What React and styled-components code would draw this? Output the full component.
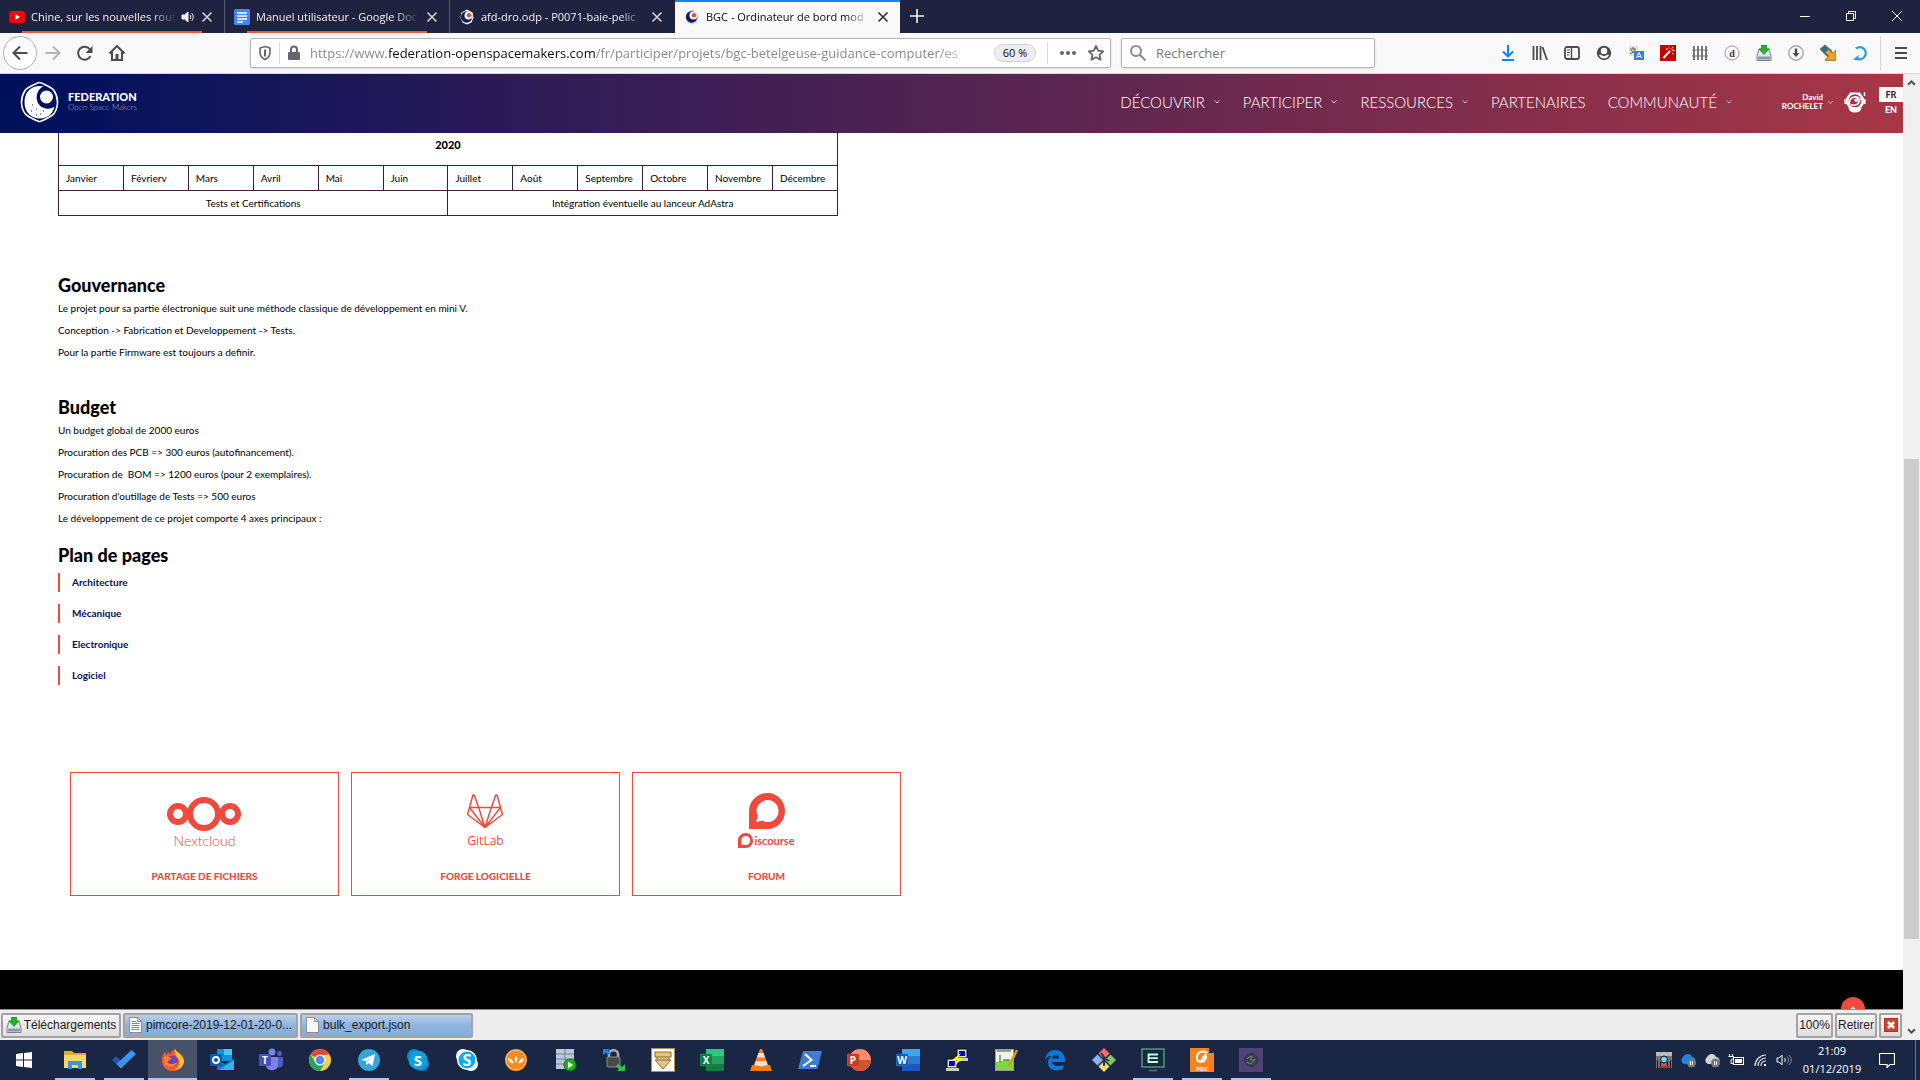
import React from 'react';
import styled, { createGlobalStyle, css } from 'styled-components';

const CHROME_FONT = '"Open Sans", "Noto Sans", sans-serif';
const SITE_FONT = 'Lato, "Open Sans", sans-serif';
const CLASSIC_FONT = '"Liberation Sans", Arial, sans-serif';
const RED = '#ef4a3c';

const GlobalStyle = createGlobalStyle`
    * {
        box-sizing: border-box;
    }

    body {
        margin: 0;
        overflow: hidden;
        background: #fff;
        font-family: ${CHROME_FONT};
    }

    button,
    input {
        margin: 0;
        padding: 0;
        border: 0;
        background: none;
        color: inherit;
        font: inherit;
    }

    a {
        color: inherit;
        text-decoration: none;
    }

    svg {
        display: block;
        flex: none;
    }
`;

const Window = styled.div`
    display: flex;
    flex-direction: column;
    height: 100vh;
`;

/* ---------- tab strip ---------- */

const TabStrip = styled.div`
    display: flex;
    flex: none;
    height: 33px;
    background: #20233f;
    color: #f0f0f4;
`;

const Tab = styled.div`
    position: relative;
    display: flex;
    align-items: center;
    gap: 6px;
    flex: 0 1 225px;
    min-width: 0;
    padding: 1px 10px 0 9px;
    border-right: 1px solid ${props => props.$last ? 'transparent' : '#585a70'};
    ${props => props.$active && css`
        border-right: 0;
        box-shadow: inset 0 2px 0 #0a84ff;
        background: #f9f9fa;
        color: #0c0c0d;
    `}
`;

const TabTitle = styled.span`
    flex: 1;
    min-width: 0;
    overflow: hidden;
    white-space: nowrap;
    font-size: 11px;
    line-height: 20px;
    mask-image: linear-gradient(to left, transparent 0, #000 24px);
`;

const ContainerLine = styled.span`
    position: absolute;
    left: 22px;
    right: 22px;
    bottom: 0;
    height: 2px;
    background: #e05f3f;
`;

const PlainButton = styled.button`
    display: flex;
    align-items: center;
    justify-content: center;
    flex: none;
    width: ${props => props.$w || 16}px;
    height: ${props => props.$h || 16}px;
    color: ${props => props.$color || 'inherit'};
`;

const WindowButtons = styled.div`
    display: flex;
    margin-left: auto;
`;

/* ---------- toolbar ---------- */

const Toolbar = styled.div`
    display: flex;
    align-items: center;
    flex: none;
    height: 41px;
    border-bottom: 1px solid #d7d7db;
    background: #f9f9fa;
    color: #4a4a4f;
`;

const NavButtons = styled.div`
    display: flex;
    flex: 0 1 250px;
    align-items: center;
    padding-left: 3px;
`;

const BackButton = styled.button`
    display: flex;
    align-items: center;
    justify-content: center;
    width: 34px;
    height: 34px;
    border: 1px solid #b1b1b3;
    border-radius: 50%;
    background: #fff;
`;

const FieldBox = styled.div`
    display: flex;
    align-items: center;
    min-width: 0;
    height: 30px;
    border: 1px solid #b5b5b8;
    border-radius: 2px;
    background: #fff;
    box-shadow: 0 1px 3px rgba(0, 0, 0, 0.1);
`;

const UrlBox = styled(FieldBox)`
    flex: 0 1 861px;
    padding-left: 6px;
`;

const SearchBox = styled(FieldBox)`
    flex: 0 1 254px;
    margin-left: 10px;
    padding-left: 8px;
    gap: 10px;
`;

const UrlInput = styled.input`
    flex: 1;
    min-width: 0;
    margin-left: 8px;
    height: 24px;
    font-size: 13px;
    background: linear-gradient(to right, #85858a 79px, #0c0c0d 79px, #0c0c0d 286px, #85858a 286px, #85858a 625px, #d5d5d8 655px);
    -webkit-background-clip: text;
    background-clip: text;
    -webkit-text-fill-color: transparent;
    outline: 0;
`;

const SearchInput = styled.input`
    flex: 1;
    min-width: 0;
    height: 24px;
    font-size: 13px;
    outline: 0;

    &::placeholder {
        color: #77777b;
        opacity: 1;
    }
`;

const Divider = styled.span`
    flex: none;
    width: 1px;
    height: ${props => props.$h || 22}px;
    margin: 0 ${props => props.$gap || 6}px;
    background: #d7d7db;
`;

const ZoomButton = styled.button`
    flex: none;
    width: 42px;
    height: 18px;
    margin: 0 5px 0 20px;
    border: 1px solid #d2d2d6;
    border-radius: 9px;
    background: #ededf0;
    color: #0c0c0d;
    font-size: 11px;
    line-height: 16px;
`;

const Extensions = styled.div`
    display: flex;
    align-items: center;
    gap: 16px;
    margin-left: auto;
    padding-right: 11px;
`;

/* ---------- viewport ---------- */

const Viewport = styled.div`
    display: flex;
    flex: 1;
    min-height: 0;
`;

const Page = styled.div`
    display: flex;
    flex-direction: column;
    flex: 1;
    min-width: 0;
    font-family: ${SITE_FONT};
`;

const ScrollBar = styled.div`
    display: flex;
    flex-direction: column;
    flex: none;
    width: 17px;
    background: #f0f0f0;
    color: #505050;
`;

const ScrollGap = styled.span`
    flex: ${props => props.$grow} 0 0;
`;

const ScrollThumb = styled.span`
    flex: 480 0 0;
    margin: 0 1px;
    background: #cdcdcd;
`;

const SiteHeader = styled.header`
    display: flex;
    align-items: center;
    flex: none;
    height: 59px;
    padding: 0 0 3px 20px;
    background: linear-gradient(to right, #00115c 2%, #a73746 100%);
    color: #fff;
`;

const Brand = styled.a`
    display: flex;
    align-items: center;
    gap: 9px;
`;

const BrandName = styled.span`
    display: flex;
    flex-direction: column;
    font-size: 11px;
    line-height: 10px;
    font-weight: 900;
`;

const BrandSub = styled.span`
    font-size: 8px;
    font-weight: 300;
    color: #a7abd0;
`;

const MainNav = styled.nav`
    display: flex;
    align-items: center;
    gap: 22px;
    margin-left: auto;
    font-size: 15px;
    font-weight: 300;
    line-height: 20px;
`;

const NavLink = styled.a`
    display: flex;
    align-items: center;
    gap: 8px;
    white-space: nowrap;
`;

const Account = styled.a`
    display: flex;
    align-items: center;
    gap: 4px;
    margin-left: 49px;
    font-size: 8px;
    font-weight: 700;
    line-height: 9px;
    text-align: right;
`;

const Avatar = styled.span`
    margin: 0 13px 0 10px;
`;

const Languages = styled.div`
    display: flex;
    flex-direction: column;
    width: 24px;
    font-size: 9px;
    font-weight: 900;
    line-height: 15px;
    text-align: center;
`;

const Language = styled.a`
    background: ${props => props.$current ? '#fff' : 'transparent'};
    color: ${props => props.$current ? '#451c3c' : '#fff'};
`;

const Content = styled.main`
    flex: 1;
    min-height: 0;
    overflow: hidden;
    padding: 0 58px;
    color: #000;
`;

const Planning = styled.table`
    width: 100%;
    max-width: 780px;
    table-layout: fixed;
    border-collapse: collapse;
    font-size: 10px;
    line-height: 14px;

    th,
    td {
        height: 25px;
        padding: 0 0 0 7px;
        border: 1px solid #3f1b3d;
        text-align: left;
    }

    th {
        height: 32px;
        padding: 5px 0 0;
        border-top: 0;
        font-size: 11px;
        font-weight: 900;
        text-align: center;
        vertical-align: top;
    }

    td[colspan] {
        padding: 0;
        text-align: center;
    }
`;

const Heading = styled.h2`
    margin: ${props => props.$top}px 0 0;
    font-size: 18px;
    font-weight: 900;
    line-height: 24px;
`;

const Text = styled.p`
    margin: 0;
    font-size: 10px;
    line-height: 22px;
    white-space: pre-wrap;
`;

const PageList = styled.ul`
    display: flex;
    flex-direction: column;
    gap: 12px;
    margin: 6px 0 87px;
    padding: 0;
    list-style: none;
`;

const PageItem = styled.li`
    padding-left: 12px;
    border-left: 2px solid ${RED};
    color: #00115c;
    font-size: 10px;
    font-weight: 700;
    line-height: 19px;
`;

const Cards = styled.div`
    display: grid;
    grid-template-columns: repeat(3, 1fr);
    gap: 12px;
    max-width: 843px;
    padding-left: 12px;
`;

const Card = styled.a`
    display: flex;
    flex-direction: column;
    align-items: center;
    padding: 20px 0 12px;
    border: 1px solid ${RED};
    color: ${RED};
`;

const Wordmark = styled.span`
    display: flex;
    align-items: center;
    gap: 1px;
    height: 20px;
    font-family: ${props => props.$font || SITE_FONT};
    font-size: ${props => props.$size}px;
    font-weight: ${props => props.$weight};
    line-height: 20px;
`;

const CardLabel = styled.span`
    margin-top: 18px;
    font-size: 10px;
    font-weight: 900;
    line-height: 14px;
`;

const Footer = styled.footer`
    display: flex;
    justify-content: flex-end;
    flex: none;
    height: 39px;
    padding: 27px 38px 0 0;
    overflow: hidden;
    background: #000;
`;

const TopButton = styled.button`
    display: flex;
    justify-content: center;
    flex: none;
    width: 24px;
    height: 24px;
    padding-top: 9px;
    border-radius: 50%;
    background: ${RED};
    color: #fff;
`;

/* ---------- download bar ---------- */

const DownloadBar = styled.div`
    display: flex;
    align-items: center;
    gap: 2px;
    flex: none;
    height: 31px;
    padding: 0 1px;
    border-top: 1px solid #8c8c8c;
    background: #ededed;
    font-family: ${CLASSIC_FONT};
`;

const BarButton = styled.button`
    display: flex;
    align-items: center;
    justify-content: ${props => props.$file ? 'flex-start' : 'center'};
    gap: ${props => props.$file ? 4 : 2}px;
    flex: 0 1 ${props => props.$w}px;
    height: 25px;
    padding: 0 ${props => props.$file ? 4 : 0}px;
    border: 2px solid #a3a3a3;
    border-radius: 2px;
    background: ${props => props.$file
        ? 'linear-gradient(#b9d0ec, #8fb3dd 50%, #86acda)'
        : 'linear-gradient(#f6f6f6, #dedede)'};
    color: #1c1c1c;
    font-size: 12px;
    white-space: nowrap;
`;

const Push = styled.span`
    flex: 1;
`;

/* ---------- taskbar ---------- */

const TaskBar = styled.div`
    display: flex;
    flex: none;
    height: 40px;
    background: #1a2744;
    color: #fff;
`;

const StartButton = styled(PlainButton)`
    width: 48px;
    height: 40px;
    margin-right: 2px;
`;

const TaskButton = styled.button`
    display: flex;
    align-items: center;
    justify-content: center;
    flex: 0 1 49px;
    height: 40px;
    background-color: ${props => props.$active ? '#48536b' : 'transparent'};
    ${props => props.$running && css`
        background-image: linear-gradient(#a9c7f3, #a9c7f3);
        background-repeat: no-repeat;
        background-position: bottom;
        background-size: ${props.$active ? '49px' : '40px'} 2px;
    `}
`;

const Tray = styled.div`
    display: flex;
    align-items: center;
    gap: 8px;
    margin-left: auto;
`;

const Clock = styled.time`
    display: flex;
    flex-direction: column;
    width: 64px;
    margin-right: 7px;
    font-size: 11px;
    line-height: 18px;
    text-align: center;
`;

const DesktopEdge = styled.button`
    width: 5px;
    height: 40px;
    margin-left: 12px;
    border-left: 1px solid #66708a;
`;

/* ---------- drawings ---------- */

const Svg = ({ w = 16, h = w, box, children, ...rest }) => (
    <svg width={w} height={h} viewBox={box || `0 0 ${w} ${h}`} fill="none" aria-hidden="true" {...rest}>
        {children}
    </svg>
);

const Chevron = ({ w = 8 }) => (
    <Svg w={w} box="0 0 8 8" stroke="currentColor" strokeOpacity=".8">
        <path d="M1.500 2.500L4 5l2.500-2.500" />
    </Svg>
);

const CloseIcon = () => (
    <Svg w={12} stroke="currentColor" strokeOpacity=".85" strokeWidth="1.600"><path d="M1.500 1.500l9 9M10.500 1.500l-9 9" /></Svg>
);

const YoutubeIcon = () => (
    <Svg><rect y="2" width="16" height="12" rx="3" fill="#f00" /><path d="M6.500 5.200v5.600L11 8z" fill="#fff" /></Svg>
);

const DocsIcon = () => (
    <Svg><rect width="16" height="16" rx="1.500" fill="#4285f4" /><path d="M3 4h10M3 7h10M3 10h10M3 13h6" stroke="#fff" strokeWidth="1.500" /></Svg>
);

const FederationIcon = ({ ring = '#fff' }) => (
    <Svg>
        <path d="M8 .5l5.500 3 1 5-2 5L8 15.500l-4.500-2-2-5 1-5z" fill={ring} />
        <circle cx="7.600" cy="8" r="5.700" fill="#111a5c" />
        <circle cx="9.500" cy="6.500" r="4" fill="#fff" />
        <circle cx="10" cy="6.200" r="2.300" fill={RED} />
    </Svg>
);

const SoundIcon = () => (
    <Svg w={14} h={14} stroke="currentColor">
        <path d="M1 5h2.500L7 2v10L3.500 9H1z" fill="currentColor" />
        <path d="M9 5c1 1 1 3 0 4M10.500 3c2.300 2 2.300 6 0 8" />
    </Svg>
);

const FederationLogo = () => (
    <Svg w={39} h={42}>
        <path d="M19.500 1.500c1.500 0 13 5.500 14.500 8 2.500 4 3.500 8 3.500 11.500S36.500 29 34 32.500c-1.500 2.500-13 8-14.500 8s-13-5.500-14.500-8C2.500 29 1.500 24.500 1.500 21S2.500 13.500 5 9.500c1.500-2.500 13-8 14.500-8z" stroke="#fff" strokeWidth="1.600" />
        <path d="M20 5C10 5 4.500 12 4.500 21.500S11 37.500 20 37.500c8 0 13-5 14.500-12-3 3-12 3.500-16-2.500-4-6.500-1-15.500 5-17.500z" fill="#fff" />
        <circle cx="26.500" cy="16" r="6.500" fill="#fff" />
        <path d="M12 24h1M16 28h1M20 33h1M11 30h1M23 30h1M16 34h1" stroke="#00115c" />
    </Svg>
);

const AstronautIcon = () => (
    <Svg w={22} h={22}>
        <path d="M4.500 17h13c-.5 3-3 4.500-6.500 4.500S5 20 4.500 17z" fill="#fff" />
        <path d="M6 1.500h10l4 6v5l-4 6H6l-4-6v-5z" fill="#fff" />
        <circle cx="11" cy="9.800" r="6.500" fill="#a03447" />
        <path d="M5.500 13c-1-6 6-9.500 10.500-5-3-.5-4.500 0-5.500 1.500M6.500 13.500c4 1.500 8 .5 9-3.500H11" stroke="#fff" strokeWidth="1.600" />
        <path d="M1.200 8v5M20.800 8v5M20.500 5V1" stroke="#fff" strokeWidth="1.500" />
    </Svg>
);

const NextcloudLogo = () => (
    <Svg w={76} h={38} box="1 0 76 38" stroke="currentColor" strokeWidth="6">
        <circle cx="38" cy="21" r="14" />
        <circle cx="12" cy="21" r="8" />
        <circle cx="64" cy="21" r="8" />
    </Svg>
);

const GitlabLogo = () => (
    <Svg w={38} h={38} box="1 1 38 38" stroke="currentColor" strokeWidth="1.500" strokeLinejoin="round">
        <path d="M19 35.500L1.500 22.500 7 3h1.200l4.500 12.500h12.600L29.800 3H31l5.500 19.500z" />
        <path d="M12.700 15.500L19 35.500l6.300-20M3.500 15.500h9.200M25.300 15.500h9.200M3.500 15.500L19 35.500l15.500-20" />
    </Svg>
);

const DiscourseMark = ({ size, box = '0 0 36 36' }) => (
    <Svg w={size} box={box}>
        <path d="M18.500 0C8.500 0 0 8 0 18v18h18.500C28.500 36 36 28 36 18S28.500 0 18.500 0zm.5 7c6 0 10.500 5 10.500 11S25 29 19 29c-2 0-4-.5-5.500-1.500L7 29l2-6.500C8 21 7.500 19.500 7.500 18 7.500 12 13 7 19 7z" fill="currentColor" />
    </Svg>
);

const DriveIcon = () => (
    <Svg>
        <path d="M3 4h10l2 7v4.500H1V11z" fill="#dfe4ec" stroke="#7d828c" />
        <path d="M2 11.500h12v3H2z" fill="#8e98a8" />
        <path d="M5.500 0h5v4H13L8 9.500 3 4h2.500z" fill="#23b423" stroke="#128012" strokeWidth=".6" />
    </Svg>
);

const FileIcon = ({ lined }) => (
    <Svg w={13} h={16}>
        <path d="M.5.500h8l4 4v11H.500z" fill="#f8f8f8" stroke="#8d8d8d" />
        <path d="M8.500.500v4h4" stroke="#8d8d8d" />
        {lined && <path d="M2.500 4.500H7M2.500 6.500h8M2.500 8.500h8M2.500 10.500h8M2.500 12.500h8" stroke="#888" />}
    </Svg>
);

const extensions = [
    ['Téléchargements', <Svg stroke="#0a84ff" strokeWidth="2"><path d="M8 0v11M3 6.500l5 5 5-5M2 15h12" /></Svg>],
    ['Bibliothèque', <Svg stroke="#4a4a4f" strokeWidth="1.800"><path d="M1.500 1v14M5 1v14M8.500 1v14M10.500 2l4.500 13" /></Svg>],
    ['Panneaux latéraux', <Svg stroke="#4a4a4f" strokeWidth="1.800"><rect x="1" y="2" width="14" height="12" rx="2" /><path d="M7.500 2v12" strokeWidth="1.400" /><path d="M3 5h3M3 7.500h3M3 10h2" strokeWidth="1" /></Svg>],
    ['Compte', <Svg><circle cx="8" cy="8" r="7.200" fill="#4a4a4f" /><circle cx="8" cy="6" r="3.200" fill="#f9f9fa" /><path d="M3 10c1.500-.6 2.500 0 3.500.8 1 .5 2 .5 3 0 1-.8 2-1.400 3.500-.8-1.500 4.500-8.500 4.500-10 0z" fill="#f9f9fa" /></Svg>],
    ['Traduire', <Svg><rect x="1" y="1" width="9" height="10" fill="#e5e2cf" /><path d="M2 4h6M5 2v2M7 4c-1 3-3 4-5 5M3 5c1 2 3 3 5 4" stroke="#656565" /><rect x="6" y="6" width="10" height="9" fill="#3d7de0" /><path d="M8.500 13L11 7.500l2.500 5.500M9.500 11.500h3" stroke="#fff" /></Svg>],
    ['Baguette', <Svg><rect width="16" height="16" fill="#c40000" /><path d="M3.500 13l6.500-7" stroke="#fff" strokeWidth="2" /><path d="M9 2.500l1 1M13 2l-1 1.500M11.500 5l3 .5M6 4h2M12 8l1.500 1" stroke="#fff" /></Svg>],
    ['Grille', <Svg stroke="#77777b"><path d="M2 1v14M6 1v14M10 1v14M14 1v14" strokeWidth="2" /><path d="M0 5h16M0 11h16" /></Svg>],
    ['Dictionnaire', <Svg><circle cx="8" cy="8" r="7" fill="#fff" stroke="#9c8ac8" /><text x="8" y="11.500" textAnchor="middle" fontFamily="Liberation Serif" fontWeight="700" fontSize="10" fill="#333">d</text></Svg>],
    ['Barre', <DriveIcon />],
    ['Récupérer', <Svg><circle cx="8" cy="8" r="7.200" stroke="#aaa" strokeWidth="1.500" /><path d="M8 3.500v6" stroke="#4a4a4f" strokeWidth="2.500" /><path d="M4.500 8h7L8 12z" fill="#4a4a4f" /></Svg>],
    ['Flèche', <Svg><path d="M0 4l5-4 6 5 1.500 3L8 12 5 9.500z" fill="#31708a" stroke="#284a5a" strokeWidth=".5" /><path d="M5 7.500L8.500 4l4 4L16 5v10.500H5L8.500 11z" fill="#eda125" stroke="#7e5c28" strokeWidth=".7" /></Svg>],
    ['Recharger tout', <Svg stroke="#2aa3d8" strokeWidth="2.400"><path d="M4 3.500A6 6 0 1 1 5 13.500" /><path d="M1 14.500l5.500 1V10z" fill="#2aa3d8" stroke="none" /></Svg>],
];

const OfficeIcon = ({ letter, dark, mid, light, round }) => (
    <Svg w={24}>
        {round
            ? <><circle cx="13" cy="12" r="11" fill={light} /><path d="M13 12h11a11 11 0 0 1-22 0z" fill={mid} /></>
            : <><rect x="6" y="1" width="18" height="22" rx="1" fill={mid} /><path d="M6 1h18v7H6z" fill={light} /><path d="M6 16h18v7H6z" fill={dark} /></>}
        <rect y="6" width="12" height="12" rx="1" fill={dark} stroke={mid} strokeWidth=".5" />
        <text x="6" y="15.500" textAnchor="middle" fontFamily="Open Sans" fontWeight="700" fontSize="10" fill="#fff">{letter}</text>
    </Svg>
);

const tasks = [
    { name: 'Explorateur', running: true, icon: <Svg w={24}><path d="M1 3h8l2 2h12v15H1z" fill="#e8a92a" /><path d="M1 7h22v13H1z" fill="#fbd668" /><path d="M5 21v-8h14v8h-4v-4H9v4z" fill="#3f91d8" /></Svg> },
    { name: 'To Do', running: true, icon: <Svg w={24}><path d="M0 12l4-4 6.500 6L9 20.500z" fill="#1e56b4" /><path d="M4.500 16L19.500 2 24 6 9 20.500z" fill="#3d94ee" /></Svg> },
    { name: 'Firefox', running: true, active: true, icon: <Svg w={24}><path d="M12 23C5 23 1 18 1 12c0-3 1-6 3-8l1 3 3-3 1 3c1-3 3-5 5-6 1 3 3 4 4 6l2-1c2 3 3 5 3 7 0 6-5 10-11 10z" fill="#ff5a2a" /><path d="M14 1c1 3 8 5 9 12 0 5-5 9-10 9 6-3 7-8 4-12-2-2-4-5-3-9z" fill="#ffc52e" /><circle cx="11.500" cy="13" r="5.500" fill="#7540bd" /><path d="M3 9c3-1 6 0 8 2-3 0-3 2-5 3 3 4 8 2 10 0-1 5-9 7-12 2z" fill="#ff8a22" /></Svg> },
    { name: 'Outlook', icon: <Svg w={24}><path d="M7 1h15v12H7z" fill="#1490df" /><path d="M14 1h8v6h-8z" fill="#50c4f5" /><path d="M7 12l8 4 9-5v11H7z" fill="#1478c8" /><path d="M9 22l15-10v10z" fill="#35b3ed" /><rect y="6" width="12" height="12" rx="1" fill="#0b5cab" /><circle cx="6" cy="12" r="3" stroke="#fff" strokeWidth="1.800" /></Svg> },
    { name: 'Teams', icon: <Svg w={24}><circle cx="13" cy="4" r="3.500" fill="#7b83eb" /><circle cx="20.500" cy="5.500" r="2.500" fill="#5059c9" /><path d="M17 9h7v7c0 3-4 5-7 3z" fill="#5059c9" /><path d="M7 9h12v8c0 7-12 7-12 0z" fill="#7b83eb" /><rect y="6" width="12" height="12" rx="1" fill="#4850b8" /><text x="6" y="15.500" textAnchor="middle" fontFamily="Open Sans" fontWeight="700" fontSize="10" fill="#fff">T</text></Svg> },
    { name: 'Chrome', icon: <Svg w={24}><circle cx="12" cy="12" r="11" fill="#f9cf48" /><path d="M12 12L2.500 6.500A11 11 0 0 1 21.500 6.500L12 7z" fill="#dc4a3d" /><path d="M2.500 6.500A11 11 0 0 0 12 23l5-8.500-9.300 0z" fill="#27a35a" /><circle cx="12" cy="12" r="5.500" fill="#fff" /><circle cx="12" cy="12" r="4.300" fill="#4a8bf0" /></Svg> },
    { name: 'Telegram', running: true, icon: <Svg w={24}><circle cx="12" cy="12" r="11" fill="#35a5dc" /><path d="M4 12l14-6-2.500 12-4-3-2 2-.5-4z" fill="#fff" /><path d="M9 13l6.500-5-4.500 6z" fill="#b8d8ea" /></Svg> },
    { name: 'Skype Entreprise', icon: <Svg w={24}><circle cx="8" cy="8" r="7" fill="#0e87c9" /><circle cx="16" cy="16" r="7" fill="#0e87c9" /><circle cx="12" cy="12" r="9.500" fill="#0e9fdc" /><text x="12" y="17.500" textAnchor="middle" fontFamily="Open Sans" fontWeight="700" fontSize="15" fill="#fff">S</text></Svg> },
    { name: 'Skype', icon: <Svg w={24}><circle cx="8" cy="8" r="7" fill="#fff" /><circle cx="16" cy="16" r="7" fill="#fff" /><circle cx="12" cy="12" r="10" fill="#fff" /><circle cx="12" cy="12" r="8.500" fill="#0dabed" /><text x="12" y="18" textAnchor="middle" fontFamily="Open Sans" fontWeight="700" fontSize="16" fill="#fff">S</text></Svg> },
    { name: 'WampServer', icon: <Svg w={24}><circle cx="12" cy="12" r="11" fill="#f78b1f" /><circle cx="12" cy="12" r="10" stroke="#ffc384" /><path d="M4 10.500c2.500-.5 4 1 4.500 2.500.5 1 1 1.500 1.500 2-3 1-5.500-1.500-6-4.500zM12 8c1.500 1.500 2 3.500 0 7-2-3.500-1.500-5.500 0-7zM20 10.500c-.5 3-3 5.500-6 4.500 1-1 1-1.500 1.500-2.500.5-1 2-2.500 4.500-2z" fill="#fff" /></Svg> },
    { name: 'Serveurs', icon: <Svg w={24}><path d="M3 1h18v20H3z" fill="#b9c8dc" /><path d="M3 6h18M3 11h18M3 16h18M12 1v20" stroke="#6e8098" /><circle cx="17" cy="17" r="6" fill="#18b51a" stroke="#087008" /><path d="M15 13.500v7l5-3.500z" fill="#fff" /></Svg> },
    { name: 'Verrou', icon: <Svg w={24}><path d="M7 10V6c0-5 9-5 9 0v4" stroke="#aaa" strokeWidth="2.500" /><rect x="5" y="9" width="13" height="10" rx="1" fill="#4a4a4a" stroke="#888" /><path d="M1 1h7L6 3l2 2-2 2-2-2-3 2z" fill="#1683e8" /><path d="M23 23h-8l2-2-3-3 2-2 4 3 3-3z" fill="#35c143" /></Svg> },
    { name: 'Réception', icon: <Svg w={24}><rect x=".5" y=".5" width="23" height="23" fill="#fff" stroke="#b48d4a" /><path d="M4 4h16v5h-2v3h2l-8 9-8-9h2V9H4z" fill="#e5c67f" stroke="#896a35" /><path d="M6 9h12M6 12h12" stroke="#896a35" /></Svg> },
    { name: 'Excel', icon: <OfficeIcon letter="X" dark="#107c41" mid="#21a366" light="#33c481" /> },
    { name: 'VLC', icon: <Svg w={24}><path d="M3 17h18l2 6H1z" fill="#f07c10" /><path d="M11 1h2l7 18c-3 2-13 2-16 0z" fill="#f58312" /><path d="M9.500 5h5l1.500 4.500H8zM7 13h10l1.500 4c-4 1.500-9 1.500-13 0z" fill="#e5e5e5" /></Svg> },
    { name: 'PowerShell', icon: <Svg w={24}><path d="M5 3h19l-4.500 18H0z" fill="#3c7bd6" /><path d="M7 6l6.500 6L5 18M12 18h6" stroke="#fff" strokeWidth="2" /></Svg> },
    { name: 'PowerPoint', icon: <OfficeIcon round letter="P" dark="#c43e1c" mid="#d35230" light="#ff8f6b" /> },
    { name: 'Word', icon: <OfficeIcon letter="W" dark="#185abd" mid="#2b7cd3" light="#41a5ee" /> },
    { name: 'PuTTY', icon: <Svg w={24}><rect x="12" y="1" width="10" height="9" fill="#ddd" stroke="#111" /><path d="M14 3h6v5h-6z" fill="#00d" /><path d="M12 10h11v3H12z" fill="#ccc" /><rect x="2" y="11" width="10" height="9" fill="#ddd" stroke="#111" /><path d="M4 13h6v5H4z" fill="#00d" /><path d="M1 20h13v3H1z" fill="#ccc" /><path d="M16 5l-9 7h5l-3 6 9-8h-5z" fill="#ff0" /></Svg> },
    { name: 'Notepad++', icon: <Svg w={24}><rect x="1.500" y="1.500" width="18" height="21" fill="#eef7e4" stroke="#9a9a9a" /><path d="M2 14l17-3v11H2z" fill="#81d53e" /><path d="M6 7v7M9 12h6M3 3h14" stroke="#444" /><path d="M23 2L15 18" stroke="#dc9a20" strokeWidth="2.500" /></Svg> },
    { name: 'Edge', icon: <Svg w={24}><path d="M2 12C3 5 7 2 12 2c6 0 10 4 10 10v2H9c0 4 7 5 11 3v4c-6 3-15 1.500-15-6 0-4 2-5.500 4-7-4 0-6 2-7 4zm7-1.500h7c0-5-7-4.500-7 0z" fill="#0a78d7" /></Svg> },
    { name: 'Git', icon: <Svg w={24}><path d="M12 0l5.500 5.500L12 11 6.500 5.500z" fill="#f5716e" /><path d="M18.500 6.500L24 12l-5.500 5.500L13 12z" fill="#7cc767" /><path d="M5.500 6.500L11 12l-5.500 5.500L0 12z" fill="#85b3ef" /><path d="M12 13l5.500 5.500L12 24l-5.500-5.500z" fill="#f3dc72" /><path d="M9 5l3 4v9M12 10l5 3" stroke="#29313b" strokeWidth="2" /></Svg> },
    { name: 'Camtasia', running: true, icon: <Svg w={24}><rect x="1" y="1" width="22" height="18" fill="#083038" stroke="#5d8d88" strokeWidth="1.500" /><path d="M17 6.500H7.500v7.500H17M8 10.200h9" stroke="#e0eeeb" strokeWidth="1.800" /><path d="M8 22.500h8" stroke="#4b7a79" strokeWidth="1.500" /></Svg> },
    { name: 'Foxit Reader', running: true, icon: <Svg w={24}><path d="M0 0h19l5 5v19H0z" fill="#f58320" /><path d="M17.500 5C11 1 6 6 7 11c1 4 8 4 9-2l-4 .5M11 13l5-7" stroke="#fff" strokeWidth="2" /><text x="12" y="22.500" textAnchor="middle" fontFamily="Open Sans" fontWeight="700" fontSize="6" fill="#fff">PDF</text><path d="M19 0v5h5z" fill="#1a2744" /></Svg> },
    { name: 'Minuteur', running: true, icon: <Svg w={24}><rect width="24" height="24" fill="#4e4277" /><circle cx="12" cy="12" r="6.500" fill="#3a4156" stroke="#2d3248" /><path d="M8 14c2 3 7 1 8-3M12 9v3h4M8 11c1-2 4-3 6-2" stroke="#8d8150" /></Svg> },
];

const trayIcons = [
    <Svg><rect width="16" height="16" fill="#777" /><path d="M0 0h16v4H0z" fill="#bbb" /><path d="M1.500 8v8M14.500 8v8M4.500 10v4M11.500 10v4" stroke="#111" /><circle cx="8" cy="7.500" r="3.500" fill="#7fc7f4" stroke="#111" /><path d="M3 15h10" stroke="#c22" strokeWidth="2" /></Svg>,
    <Svg><path d="M4 12a4 4 0 0 1-1-7c2-4 8-4 9 0 4 0 5 6 1 7z" fill="#1689df" /><circle cx="11.500" cy="11" r="4.500" fill="#777" /><path d="M10.500 9v4M12.500 9v4" stroke="#fff" /></Svg>,
    <Svg><path d="M4 12a4 4 0 0 1-1-7c2-4 8-4 9 0 4 0 5 6 1 7z" fill="#d0d3da" /><circle cx="11.500" cy="11" r="4.500" fill="#777" /><path d="M10.500 9v4M12.500 9v4" stroke="#fff" /></Svg>,
    <Svg stroke="#fff"><path d="M1.500 2v2M4.500 2v2M.5 4.500h5v2L3 8v3.500h2" /><rect x="5.500" y="5.500" width="10" height="7" /><path d="M7 7h7v4H7z" fill="#fff" stroke="none" /></Svg>,
    <Svg stroke="#dfe3ea"><path d="M3 14C3 8 8 3 14 3M6 14c0-5 4-8 8-8M9 14c0-3 2-5 5-5" strokeWidth="1.200" /><path d="M12 12h2v2h-2z" fill="#fff" stroke="none" /></Svg>,
    <Svg stroke="#fff"><path d="M1 6h2l3-3v10l-3-3H1z" /><path d="M8.500 6c1 1 1 3 0 4" /><path d="M11 4.500c2 2 2 5 0 7M13 3c3 3 3 7 0 10" stroke="#8790a3" /></Svg>,
];

const tabs = [
    { title: 'Chine, sur les nouvelles rout', icon: <YoutubeIcon />, line: true, sound: true },
    { title: 'Manuel utilisateur - Google Doc', icon: <DocsIcon />, line: true },
    { title: 'afd-dro.odp - P0071-baie-pelic', icon: <FederationIcon />, last: true },
    { title: 'BGC - Ordinateur de bord mod', icon: <FederationIcon ring="#c9cbdc" />, active: true },
];

const menu = [
    ['DÉCOUVRIR', true],
    ['PARTICIPER', true],
    ['RESSOURCES', true],
    ['PARTENAIRES', false],
    ['COMMUNAUTÉ', true],
];

const months = ['Janvier', 'Févrierv', 'Mars', 'Avril', 'Mai', 'Juin', 'Juillet', 'Août', 'Septembre', 'Octobre', 'Novembre', 'Décembre'];

const BrowserTabs = () => (
    <TabStrip>
        {tabs.map(tab => (
            <Tab key={tab.title} $active={tab.active} $last={tab.last}>
                {tab.icon}
                <TabTitle>{tab.title}</TabTitle>
                {tab.sound && <PlainButton $w={12} aria-label="Couper le son"><SoundIcon /></PlainButton>}
                <PlainButton $w={14} aria-label="Fermer l'onglet"><CloseIcon /></PlainButton>
                {tab.line && <ContainerLine />}
            </Tab>
        ))}
        <PlainButton $w={34} $h={32} aria-label="Nouvel onglet">
            <Svg w={14} stroke="currentColor" strokeWidth="1.600"><path d="M7 0v14M0 7h14" /></Svg>
        </PlainButton>
        <WindowButtons>
            <PlainButton $w={46} $h={32} aria-label="Réduire"><Svg w={10} stroke="#fff"><path d="M0 5.500h10" /></Svg></PlainButton>
            <PlainButton $w={46} $h={32} aria-label="Restaurer"><Svg w={10} stroke="#fff"><path d="M.5 2.500h7v7h-7zM2.500 2.500v-2h7v7h-2" /></Svg></PlainButton>
            <PlainButton $w={46} $h={32} aria-label="Fermer"><Svg w={10} stroke="#fff"><path d="M0 0l10 10M10 0L0 10" /></Svg></PlainButton>
        </WindowButtons>
    </TabStrip>
);

const BrowserToolbar = () => (
    <Toolbar>
        <NavButtons>
            <BackButton aria-label="Précédent">
                <Svg stroke="currentColor" strokeWidth="2"><path d="M15.500 8H1.500M8 1.500L1.500 8 8 14.500" /></Svg>
            </BackButton>
            <PlainButton $w={32} $h={32} $color="#b4b4b8" aria-label="Suivant">
                <Svg stroke="currentColor" strokeWidth="2"><path d="M.5 8h14M8 1.500L14.500 8 8 14.500" /></Svg>
            </PlainButton>
            <PlainButton $w={32} $h={32} aria-label="Actualiser">
                <Svg stroke="currentColor" strokeWidth="2"><path d="M13.500 11A6.500 6.500 0 1 1 13 4.500" /><path d="M15.500 1v7h-7z" fill="currentColor" stroke="none" /></Svg>
            </PlainButton>
            <PlainButton $w={32} $h={32} aria-label="Accueil">
                <Svg stroke="currentColor" strokeWidth="2"><path d="M.5 8.500L8 1l7.500 7.500M3 7v8h10V7" /><path d="M8 9v6" strokeWidth="3" /></Svg>
            </PlainButton>
        </NavButtons>
        <UrlBox>
            <Svg stroke="#65656a" strokeWidth="1.600"><path d="M8 1.500l5 1.500v4.500c0 3.500-2 5.500-5 7-3-1.500-5-3.500-5-7V3z" /><path d="M8 4.500v7" strokeWidth="2" /></Svg>
            <Divider />
            <Svg><rect x="2" y="7" width="12" height="8" rx="1" fill="#65656a" /><path d="M5 8V4.500c0-4 6-4 6 0V8" stroke="#65656a" strokeWidth="2" /></Svg>
            <UrlInput
                aria-label="Adresse"
                defaultValue="https://www.federation-openspacemakers.com/fr/participer/projets/bgc-betelgeuse-guidance-computer/es"
            />
            <ZoomButton>60 %</ZoomButton>
            <Divider />
            <PlainButton $w={28} aria-label="Actions"><Svg><g fill="#65656a"><circle cx="2" cy="8" r="2" /><circle cx="8" cy="8" r="2" /><circle cx="14" cy="8" r="2" /></g></Svg></PlainButton>
            <PlainButton $w={28} aria-label="Marque-page">
                <Svg stroke="#65656a" strokeWidth="1.800" strokeLinejoin="round"><path d="M8 1l2.200 4.700 5 .6-3.700 3.500 1 5L8 12.300l-4.500 2.500 1-5L.8 6.300l5-.6z" /></Svg>
            </PlainButton>
        </UrlBox>
        <SearchBox>
            <Svg stroke="#8a8a8e" strokeWidth="2"><circle cx="6" cy="6" r="5" /><path d="M10 10l5.500 5.500" /></Svg>
            <SearchInput aria-label="Rechercher" placeholder="Rechercher" />
        </SearchBox>
        <Extensions>
            {extensions.map(([name, icon]) => (
                <PlainButton key={name} aria-label={name}>{icon}</PlainButton>
            ))}
        </Extensions>
        <Divider $h={34} $gap={1} />
        <PlainButton $w={38} $h={32} aria-label="Menu">
            <Svg stroke="currentColor" strokeWidth="2"><path d="M2 3h12M2 8h12M2 13h12" /></Svg>
        </PlainButton>
    </Toolbar>
);

const Header = () => (
    <SiteHeader>
        <Brand href="#">
            <FederationLogo />
            <BrandName>FEDERATION<BrandSub>Open Space Makers</BrandSub></BrandName>
        </Brand>
        <MainNav>
            {menu.map(([label, hasMenu]) => (
                <NavLink key={label} href="#">{label}{hasMenu && <Chevron />}</NavLink>
            ))}
        </MainNav>
        <Account href="#"><span>David<br />ROCHELET</span><Chevron w={7} /></Account>
        <Avatar><AstronautIcon /></Avatar>
        <Languages>
            <Language href="#" $current>FR</Language>
            <Language href="#">EN</Language>
        </Languages>
    </SiteHeader>
);

const Project = () => (
    <Content>
        <Planning>
            <thead>
                <tr><th colSpan={12}>2020</th></tr>
            </thead>
            <tbody>
                <tr>{months.map(month => <td key={month}>{month}</td>)}</tr>
                <tr>
                    <td colSpan={6}>Tests et Certifications</td>
                    <td colSpan={6}>Intégration éventuelle au lanceur AdAstra</td>
                </tr>
            </tbody>
        </Planning>

        <Heading $top={57}>Gouvernance</Heading>
        <Text>Le projet pour sa partie électronique suit une méthode classique de développement en mini V.</Text>
        <Text>Conception -&gt; Fabrication et Developpement -&gt; Tests.</Text>
        <Text>Pour la partie Firmware est toujours a definir.</Text>

        <Heading $top={32}>Budget</Heading>
        <Text>Un budget global de 2000 euros</Text>
        <Text>Procuration des PCB =&gt; 300 euros (autofinancement).</Text>
        <Text>{'Procuration de  BOM => 1200 euros (pour 2 exemplaires).'}</Text>
        <Text>Procuration d'outillage de Tests =&gt; 500 euros</Text>
        <Text>Le développement de ce projet comporte 4 axes principaux :</Text>

        <Heading $top={14}>Plan de pages</Heading>
        <PageList>
            {['Architecture', 'Mécanique', 'Electronique', 'Logiciel'].map(name => (
                <PageItem key={name}><a href="#">{name}</a></PageItem>
            ))}
        </PageList>

        <Cards>
            <Card href="#">
                <NextcloudLogo />
                <Wordmark $size={14} $weight={300}>Nextcloud</Wordmark>
                <CardLabel>PARTAGE DE FICHIERS</CardLabel>
            </Card>
            <Card href="#">
                <GitlabLogo />
                <Wordmark $size={12} $weight={400} $font={CHROME_FONT}>GitLab</Wordmark>
                <CardLabel>FORGE LOGICIELLE</CardLabel>
            </Card>
            <Card href="#">
                <DiscourseMark size={38} box="-1 0 38 38" />
                <Wordmark $size={11} $weight={700}><DiscourseMark size={15} />iscourse</Wordmark>
                <CardLabel>FORUM</CardLabel>
            </Card>
        </Cards>
    </Content>
);

const Downloads = () => (
    <DownloadBar>
        <BarButton $w={120}><DriveIcon />Téléchargements</BarButton>
        <BarButton $w={173} $file><FileIcon lined />pimcore-2019-12-01-20-0...</BarButton>
        <BarButton $w={173} $file><FileIcon />bulk_export.json</BarButton>
        <Push />
        <BarButton $w={37}>100%</BarButton>
        <BarButton $w={42}>Retirer</BarButton>
        <BarButton $w={23} aria-label="Fermer">
            <Svg w={14}><rect width="14" height="14" rx="1" fill="#d6402c" stroke="#8f1e10" /><path d="M4 4l6 6M10 4l-6 6" stroke="#fff" strokeWidth="2.500" /></Svg>
        </BarButton>
    </DownloadBar>
);

const WindowsTaskBar = () => (
    <TaskBar>
        <StartButton aria-label="Démarrer">
            <Svg><path d="M0 2l7-1v6.500H0zM8 1l8-1v7.500H8zM0 8.500h7V15l-7-1zM8 8.500h8V16l-8-1z" fill="#fff" /></Svg>
        </StartButton>
        {tasks.map(task => (
            <TaskButton key={task.name} aria-label={task.name} $running={task.running} $active={task.active}>
                {task.icon}
            </TaskButton>
        ))}
        <Tray>
            {trayIcons.map((icon, i) => <React.Fragment key={i}>{icon}</React.Fragment>)}
            <Clock><span>21:09</span><span>01/12/2019</span></Clock>
            <PlainButton aria-label="Notifications">
                <Svg stroke="#fff" strokeWidth="1.200"><path d="M.5 1.500h15v11H11l-3 3v-3H.5z" /></Svg>
            </PlainButton>
            <DesktopEdge aria-label="Afficher le bureau" />
        </Tray>
    </TaskBar>
);

export default function App() {
    return (
        <Window>
            <GlobalStyle />
            <BrowserTabs />
            <BrowserToolbar />
            <Viewport>
                <Page>
                    <Header />
                    <Project />
                    <Footer>
                        <TopButton aria-label="Haut de page"><Svg w={8} h={6} stroke="currentColor" strokeWidth="2"><path d="M1 5l3-3 3 3" /></Svg></TopButton>
                    </Footer>
                    <Downloads />
                </Page>
                <ScrollBar>
                    <PlainButton $w={17} $h={17} aria-label="Défiler vers le haut"><Svg w={9} box="0 0 8 8" stroke="currentColor" strokeWidth="1.800"><path d="M1 6l3-3 3 3" /></Svg></PlainButton>
                    <ScrollGap $grow={368} />
                    <ScrollThumb />
                    <ScrollGap $grow={84} />
                    <PlainButton $w={17} $h={17} aria-label="Défiler vers le bas"><Svg w={9} box="0 0 8 8" stroke="currentColor" strokeWidth="1.800"><path d="M1 2l3 3 3-3" /></Svg></PlainButton>
                </ScrollBar>
            </Viewport>
            <WindowsTaskBar />
        </Window>
    );
}
